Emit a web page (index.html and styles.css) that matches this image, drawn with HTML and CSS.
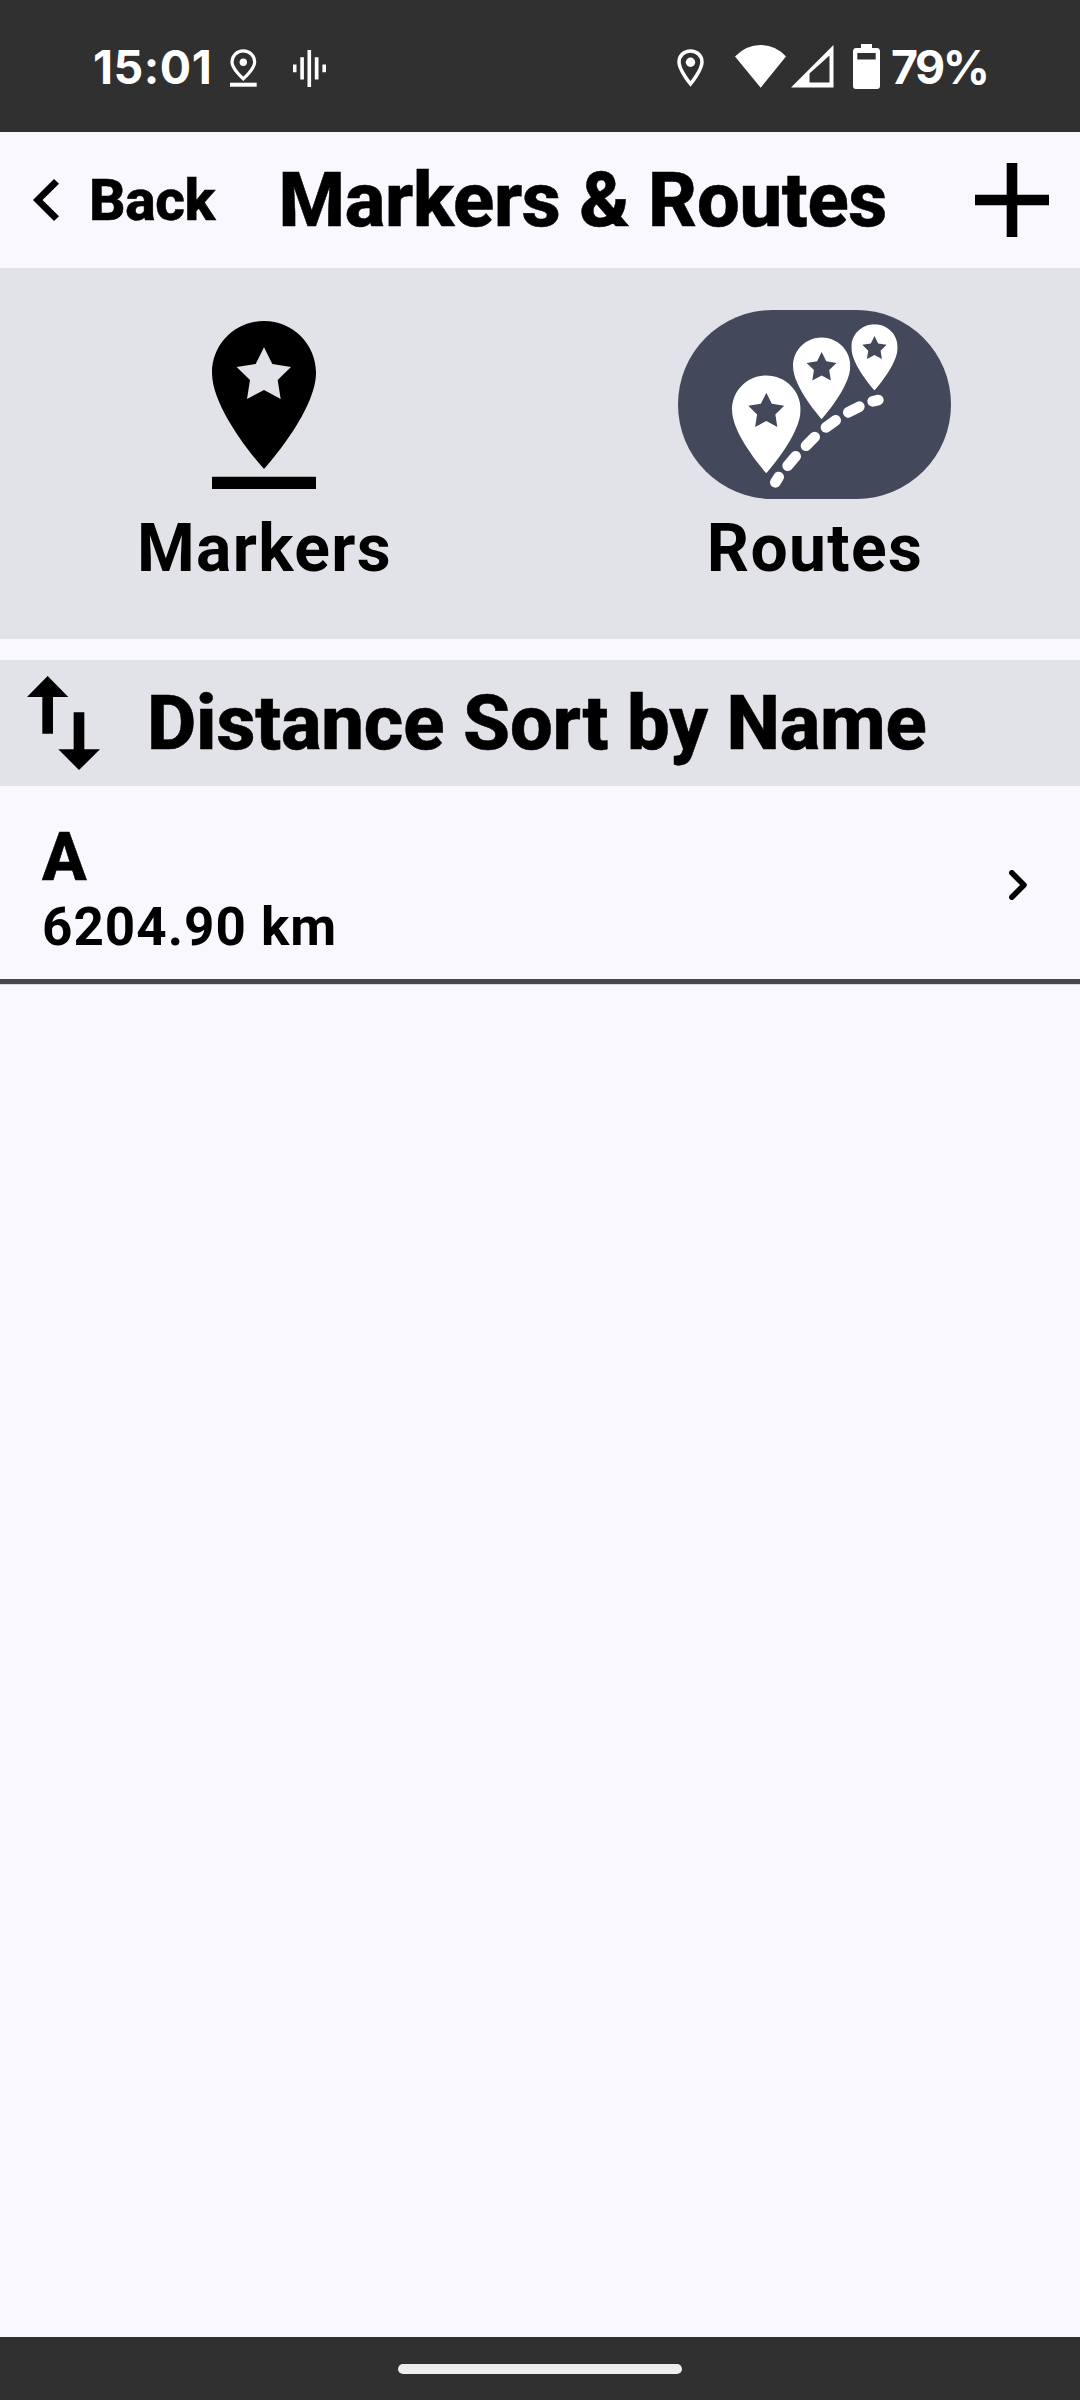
FILE: index.html
```html
<!DOCTYPE html>
<html lang="en">
<head>
<meta charset="utf-8">
<title>Markers &amp; Routes</title>
<link rel="stylesheet" href="styles.css">
</head>
<body>
<svg class="defs" aria-hidden="true">
  <symbol id="pin" viewBox="0 0 312 444">
    <path fill-rule="evenodd" d="M156 0C70 0 0 69 0 155C0 272 156 444 156 444S312 272 312 155C312 69 242 0 156 0ZM156 79L181 129L237 138L197 177L206 234L156 207L105 234L114 177L74 138L131 129Z"/>
  </symbol>
</svg>
<div class="screen">
  <header class="status">
    <div class="status-group">
      <span class="clock">15:01</span>
      <svg class="status-place" viewBox="0 0 27 38"><path d="M13.300 1.900C7 1.900 2 6.800 2 13C2 20 13.300 29.800 13.300 29.800S24.700 20 24.700 13C24.700 6.800 19.600 1.900 13.300 1.900Z" fill="none" stroke="#fff" stroke-width="3.200"/><circle cx="13.300" cy="13.300" r="3.700" fill="#fff"/><path d="M0 33.700H26.700V37.700H0Z" fill="#fff"/></svg>
      <svg class="status-wave" viewBox="0 0 34 38"><path d="M0 14.500H3.500V22.300H0ZM7.300 7.200H10.900V29.500H7.300ZM14.500 0H18.100V37H14.500ZM21.800 7.200H25.500V29.500H21.800ZM29.400 14.500H33V22.300H29.400Z" fill="#fff"/></svg>
    </div>
    <div class="status-group">
      <svg class="status-pin" viewBox="0 0 28 38"><path d="M13.500 1.900C7 1.900 2 6.800 2 13C2 21 13.500 35 13.500 35S25 21 25 13C25 6.800 20 1.900 13.500 1.900Z" fill="none" stroke="#fff" stroke-width="3.500"/><circle cx="13.500" cy="13.200" r="4.700" fill="#fff"/></svg>
      <svg class="status-wifi" viewBox="0 0 52 44"><path d="M0 11.500Q11 0 25.700 0T51 11.500L25.700 42.700Z" fill="#fff"/></svg>
      <svg class="status-signal" viewBox="0 0 43 43"><path fill-rule="evenodd" d="M0 42.500L42.500 0V42.500ZM18.500 28.500V37.500H38.500V10.500Z" fill="#fff"/></svg>
      <svg class="status-battery" viewBox="0 0 27 45"><path fill-rule="evenodd" d="M8 0H19V4H24Q27 4 27 7.500V42Q27 45 24 45H3Q0 45 0 42V7.500Q0 4 3 4H8ZM4.300 9V15.500H22.700V9Z" fill="#fff"/></svg>
      <span class="percent">79%</span>
    </div>
  </header>
  <nav class="appbar">
    <a class="back"><svg class="back-icon" viewBox="0 0 26 42"><path d="M0 21L21 0L26 4.800L9.500 21L26 37.200L21 42Z"/></svg><span>Back</span></a>
    <h1 class="title">Markers &amp; Routes</h1>
    <svg class="add" viewBox="0 0 74 74"><path d="M0 31.700H31.700V0H42.300V31.700H74V42.300H42.300V74H31.700V42.300H0Z"/></svg>
  </nav>
  <section class="tabs">
    <div class="tab">
      <div class="tab-icon">
        <svg class="marker-icon" viewBox="0 0 312 504"><use href="#pin" width="312" height="444"/><path d="M0 467H312V504H0Z"/></svg>
      </div>
      <span class="tab-label">Markers</span>
    </div>
    <div class="tab">
      <div class="tab-icon selected">
        <svg class="routes-icon" viewBox="54 60 819 567">
          <use href="#pin" x="216" y="255" width="206" height="296"/>
          <use href="#pin" x="399" y="141" width="172" height="248"/>
          <use href="#pin" x="574" y="103" width="139" height="198"/>
          <path class="route-line" d="M346 577L356 561M383 527L407 499M438 467L464 441M498 412L527 391M565 367L598 350M638 334L655 330"/>
        </svg>
      </div>
      <span class="tab-label">Routes</span>
    </div>
  </section>
  <section class="sort">
    <svg class="sort-icon" viewBox="80 168 219 282"><path d="M142 168L204 231H158V341H126V231H80ZM220 277H252V388H299L236 450L174 388H220Z"/></svg>
    <span class="sort-label">Distance Sort by Name</span>
  </section>
  <main class="list">
    <div class="row">
      <div class="row-text">
        <span class="row-name">A</span>
        <span class="row-distance">6204.90 km</span>
      </div>
      <svg class="row-arrow" viewBox="0 0 18 30"><path d="M2.800 2.800L15 15L2.800 27.200"/></svg>
    </div>
  </main>
  <footer class="gesture"><div class="handle"></div></footer>
</div>
</body>
</html>
```
FILE: styles.css
```css
* { box-sizing: border-box; }
body { margin: 0; font-family: Roboto, "Liberation Sans", sans-serif; color: #000; background: #f9f8ff; }
svg { display: block; flex: none; }
.defs { position: absolute; width: 0; height: 0; }
.screen { width: 1080px; height: 2400px; display: flex; flex-direction: column; overflow: hidden; }

.status { height: 132px; flex: none; background: #303030; color: #fff; display: flex; justify-content: space-between; padding: 0 93px 0 92px; font-family: Inter, sans-serif; font-weight: 700; font-size: 46.500px; white-space: nowrap; }
.status-group { display: flex; align-items: flex-start; }
.clock, .percent { line-height: 60px; margin-top: 37px; }
.clock { width: 137px; margin-left: 1px; letter-spacing: 0.500px; }
.percent { width: 96px; margin-left: 11px; letter-spacing: -2.500px; }
.status-place { width: 27px; height: 38px; margin-top: 49px; }
.status-wave { width: 34px; height: 38px; margin: 50px 0 0 36px; }
.status-pin { width: 28px; height: 38px; margin-top: 49px; }
.status-wifi { width: 52px; height: 44px; margin: 45px 0 0 30px; }
.status-signal { width: 43px; height: 43px; margin: 45px 0 0 4px; }
.status-battery { width: 27px; height: 45px; margin: 44px 0 0 19px; }

.appbar { height: 136px; flex: none; display: flex; align-items: center; padding: 0 31px 0 33px; }
.back { display: flex; align-items: center; gap: 30px; width: 185px; font-size: 57px; font-weight: 800; letter-spacing: -0.400px; }
.back-icon { width: 26px; height: 42px; }
.title { margin: 0 0 0 60.500px; font-size: 76px; font-weight: 800; line-height: 90px; letter-spacing: -0.320px; white-space: nowrap; }
.add { width: 74px; height: 74px; margin-left: auto; }
.back, .title, .sort-label, .row-name { -webkit-text-stroke: 0.500px #000; }

.tabs { height: 371px; flex: none; background: #e2e2e9; display: grid; grid-template-columns: 528px 531px; column-gap: 21px; padding-top: 42px; }
.tab { display: flex; flex-direction: column; align-items: center; }
.tab-icon { width: 273px; height: 189px; border-radius: 94.500px; display: flex; align-items: center; justify-content: center; }
.tab-icon.selected { background: #43495b; }
.marker-icon { width: 104px; height: 168px; }
.routes-icon { width: 273px; height: 189px; fill: #fff; }
.route-line { fill: none; stroke: #fff; stroke-width: 32; stroke-linecap: round; }
.tab-label { font-size: 66px; line-height: 99px; font-weight: 700; letter-spacing: 1.350px; padding-left: 1px; }

.sort { height: 126px; flex: none; margin-top: 21px; background: #e2e2e9; display: flex; align-items: center; padding-left: 26.500px; }
.sort-icon { width: 73px; height: 94px; }
.sort-label { margin-left: 47.500px; font-size: 76px; font-weight: 800; line-height: 90px; letter-spacing: -0.200px; white-space: nowrap; }

.list { flex: 1; }
.row { height: 198px; border-bottom: 5px solid #44474e; box-shadow: 0 1px #d8d8de; display: flex; justify-content: space-between; align-items: center; padding: 0 53px 0 42px; }
.row-text { display: flex; flex-direction: column; align-self: flex-start; padding-top: 35px; }
.row-name { font-size: 66px; line-height: 73px; font-weight: 800; }
.row-distance { font-size: 53px; line-height: 66px; font-weight: 700; letter-spacing: 1px; }
.row-arrow { width: 18px; height: 30px; margin-top: 5px; fill: none; stroke: #000; stroke-width: 5.500; stroke-linecap: round; stroke-linejoin: round; }

.gesture { height: 63px; flex: none; background: #303030; padding-top: 27px; }
.handle { width: 284px; height: 10px; margin: 0 auto; border-radius: 5px; background: #eee; }
```
